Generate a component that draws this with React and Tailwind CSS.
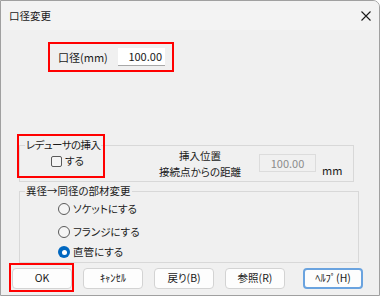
import React from "react";

function Radio({ checked }) {
  if (checked) {
    return (
      <span className="w-[12px] h-[12px] rounded-full bg-[#0067c0] flex items-center justify-center shrink-0">
        <span className="w-[5px] h-[5px] rounded-full bg-white" />
      </span>
    );
  }
  return <span className="w-[12px] h-[12px] rounded-full border border-[#5a5a5a] bg-[#f5f5f5] shrink-0" />;
}

function Btn({ children, focus }) {
  return (
    <div
      className={
        "w-[60px] h-[21px] rounded-[4px] bg-[#fdfdfd] flex items-center justify-center leading-none " +
        (focus ? "border-2 border-[#6aa3df]" : "border border-[#d3d3d3]")
      }
    >
      {children}
    </div>
  );
}

export default function App() {
  return (
    <div className="w-[384px] h-[298px] bg-white">
      <div className="w-[380px] h-[296px] border border-[#a0a0a0] rounded-tr-[7px] bg-[#f0f0f0] flex flex-col overflow-hidden text-[10.5px] text-[#1a1a1a] font-['Noto_Sans_CJK_JP',sans-serif] [font-feature-settings:'palt']">
        {/* title bar */}
        <div className="h-[29px] bg-[#f3f3f3] flex items-center justify-between pl-[8px] pr-[7px]">
          <span className="leading-[16px]">口径変更</span>
          <svg width="10" height="10" viewBox="0 0 10 10" className="mr-[1px]">
            <path d="M0.5 0.5 L9.5 9.5 M9.5 0.5 L0.5 9.5" stroke="#1a1a1a" strokeWidth="1.1" />
          </svg>
        </div>

        {/* 口径 */}
        <div className="mt-[12px] ml-[47px] w-[126px] h-[30px] border-2 border-[#ff0000] flex items-center pl-[8px]">
          <span className="leading-[16px] text-[11px]">口径(mm)</span>
          <div className="ml-auto mr-[7px] w-[47px] h-[18px] bg-white border-b border-[#a8a8a8] flex items-center justify-end pr-[3px] leading-none text-[11px]">
            100.00
          </div>
        </div>

        {/* group 1 */}
        <div className="relative mt-[73px] ml-[18px] w-[335px] h-[37px] border border-[#d8d8d8] flex items-start">
          <span className="absolute left-[5px] top-[-9px] px-[1px] bg-[#f0f0f0] leading-[16px] tracking-[-0.6px]">レデューサの挿入</span>
          <div className="ml-[31px] mt-[7px] w-[60px] flex items-center">
            <span className="w-[11px] h-[11px] rounded-[2px] border border-[#5a5a5a] bg-[#f5f5f5]" />
            <span className="ml-[3px] leading-[16px]">する</span>
          </div>
          <div className="ml-[44px] mt-[2px] w-[90px] flex flex-col items-center leading-[16px] whitespace-nowrap">
            <span>挿入位置</span>
            <span>接続点からの距離</span>
          </div>
          <div className="ml-[14px] mt-[8px] w-[57px] h-[18px] border border-[#dcdcdc] flex items-center justify-center text-[#8c8c8c] leading-none text-[11px]">
            100.00
          </div>
          <span className="ml-[6px] mt-[16px] leading-[16px] text-[11px]">mm</span>
          <div className="absolute left-[-3px] top-[-12px] w-[88px] h-[44px] border-2 border-[#ff0000]" />
        </div>

        {/* group 2 */}
        <div className="relative mt-[9px] ml-[18px] w-[340px] h-[72px] border border-[#d8d8d8] flex flex-col pl-[38px]">
          <span className="absolute left-[5px] top-[-9px] px-[1px] bg-[#f0f0f0] leading-[16px]">異径→同径の部材変更</span>
          <div className="mt-[9px] flex items-center gap-[3px] leading-[16px]">
            <Radio />
            <span>ソケットにする</span>
          </div>
          <div className="mt-[7px] flex items-center gap-[3px] leading-[16px]">
            <Radio />
            <span>フランジにする</span>
          </div>
          <div className="mt-[4px] flex items-center gap-[3px] leading-[16px]">
            <Radio checked />
            <span>直管にする</span>
          </div>
        </div>

        {/* buttons */}
        <div className="mt-[5px] ml-[11px] flex items-start">
          <div className="relative">
            <Btn>OK</Btn>
            <div className="absolute left-[-3px] top-[-5px] w-[65px] h-[29px] border-2 border-[#ff0000]" />
          </div>
          <div className="ml-[11px]"><Btn>ｷｬﾝｾﾙ</Btn></div>
          <div className="ml-[11px]"><Btn>戻り(B)</Btn></div>
          <div className="ml-[11px]"><Btn>参照(R)</Btn></div>
          <div className="ml-[18px]"><Btn focus>ﾍﾙﾌﾟ(H)</Btn></div>
        </div>
      </div>
    </div>
  );
}
